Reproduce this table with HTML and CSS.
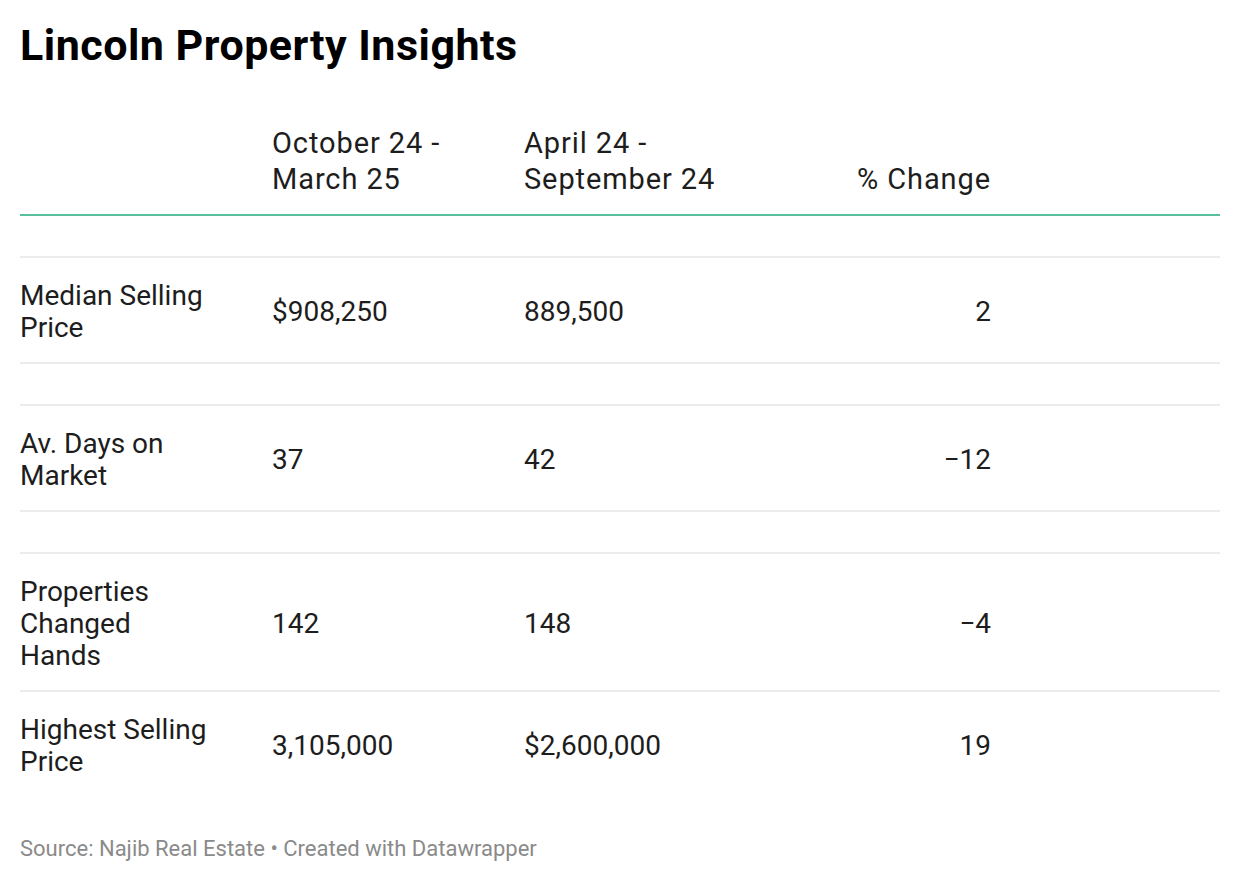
FILE: index.html
```html
<!DOCTYPE html>
<html lang="en">
<head>
<meta charset="utf-8">
<title>Lincoln Property Insights</title>
<link rel="stylesheet" href="styles.css">
</head>
<body>
<main class="chart">
  <h1 class="title">Lincoln Property Insights</h1>
  <div class="table">
    <div class="row head">
      <div class="cell"></div>
      <div class="cell">October 24 -<br>March 25</div>
      <div class="cell">April 24 -<br>September 24</div>
      <div class="cell num">% Change</div>
      <div class="cell"></div>
    </div>
    <div class="row empty"></div>
    <div class="row">
      <div class="cell label">Median Selling<br>Price</div>
      <div class="cell">$908,250</div>
      <div class="cell">889,500</div>
      <div class="cell num">2</div>
      <div class="cell"></div>
    </div>
    <div class="row empty"></div>
    <div class="row">
      <div class="cell label">Av. Days on<br>Market</div>
      <div class="cell">37</div>
      <div class="cell">42</div>
      <div class="cell num">−12</div>
      <div class="cell"></div>
    </div>
    <div class="row empty"></div>
    <div class="row">
      <div class="cell label">Properties<br>Changed<br>Hands</div>
      <div class="cell">142</div>
      <div class="cell">148</div>
      <div class="cell num">−4</div>
      <div class="cell"></div>
    </div>
    <div class="row last">
      <div class="cell label">Highest Selling<br>Price</div>
      <div class="cell">3,105,000</div>
      <div class="cell">$2,600,000</div>
      <div class="cell num">19</div>
      <div class="cell"></div>
    </div>
  </div>
  <p class="source">Source: Najib Real Estate • Created with Datawrapper</p>
</main>
</body>
</html>
```
FILE: styles.css
```css
html, body {
  margin: 0;
  padding: 0;
  background: #ffffff;
}
body {
  font-family: Roboto, "Liberation Sans", sans-serif;
  color: #1d1d1d;
}
.chart {
  padding: 20px 20px 0 20px;
}
.title {
  margin: 0;
  font-size: 43px;
  letter-spacing: 0.5px;
  font-weight: 700;
  line-height: 50px;
  color: #000000;
}
.table {
  margin-top: 55px;
}
.row {
  display: grid;
  grid-template-columns: 252px 252px 252px 215px 1fr;
  align-items: center;
  border-bottom: 2px solid #ececec;
  font-size: 28px;
  line-height: 32px;
}
.row .cell {
  padding: 22px 0 18px 0;
}
.row.head {
  align-items: end;
  border-bottom: 2px solid #5abf9e;
  font-size: 29px;
  letter-spacing: 0.9px;
  line-height: 36px;
}
.row.head .cell {
  padding: 0 0 17px 0;
}
.row.empty {
  height: 40px;
}
.row.last {
  border-bottom: none;
}
.num {
  text-align: right;
}
.source {
  margin: 40px 0 0 0;
  font-size: 22px;
  line-height: 26px;
  color: #8a8a8a;
}
```
